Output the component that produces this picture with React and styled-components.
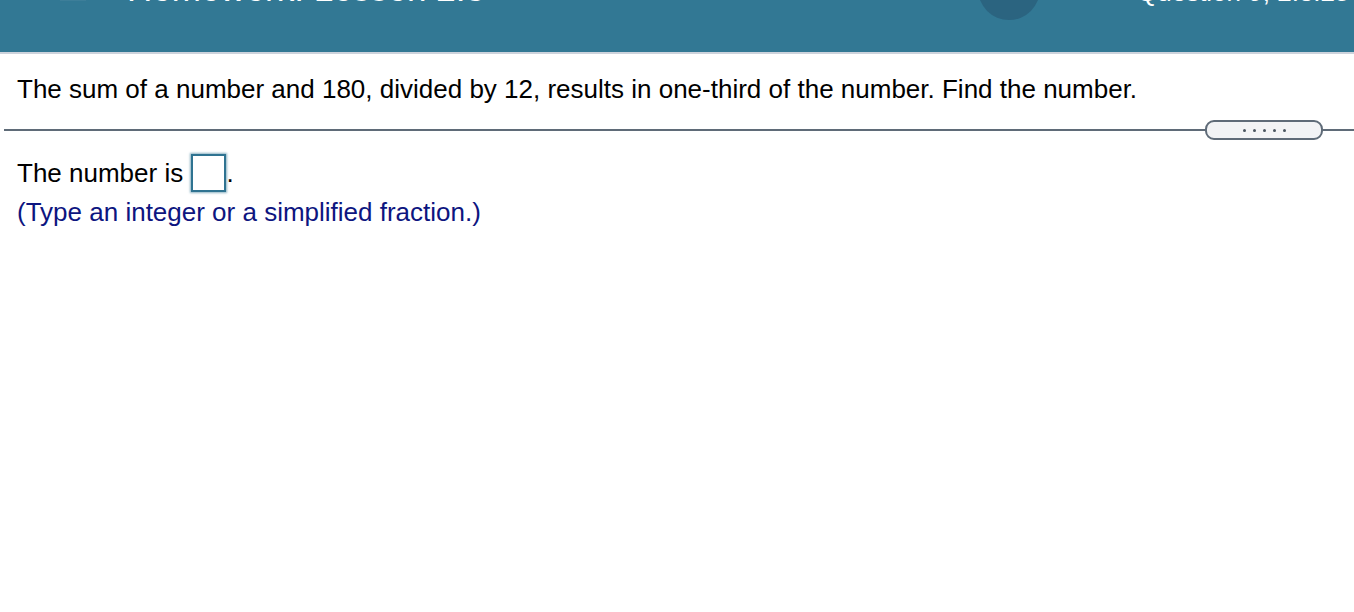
import React from 'react';
import styled, { createGlobalStyle } from 'styled-components';

const GlobalStyle = createGlobalStyle`
    html, body {
        margin: 0;
        padding: 0;
        background: #fff;
        font-family: Arial, "Liberation Sans", sans-serif;
        overflow: hidden;
    }
`;

export default function App() {
    return (
        <Page>
            <GlobalStyle />
            <Header>
                <MenuIcon />
                <Title>Homework: Lesson 2.3</Title>
                <Avatar />
                <QuestionInfo>Question 9, 2.3.25-T</QuestionInfo>
            </Header>
            <Question>
                The sum of a number and 180, divided by 12, results in one-third of the number. Find the number.
            </Question>
            <Divider>
                <Rule />
                <MoreButton>
                    <Dot /><Dot /><Dot /><Dot /><Dot />
                </MoreButton>
                <Rule $short />
            </Divider>
            <Answer>
                <AnswerLine>
                    <span>The number is </span>
                    <AnswerBox />
                    <span>.</span>
                </AnswerLine>
                <Hint>(Type an integer or a simplified fraction.)</Hint>
            </Answer>
        </Page>
    );
}

const Page = styled.div`
    width: 1354px;
    height: 612px;
    overflow: hidden;
    display: flex;
    flex-direction: column;
`;

const Header = styled.div`
    flex: none;
    height: 100px;
    margin-top: -46px;
    background: #327894;
    border-bottom: 2px solid #cdd3dc;
    display: flex;
    align-items: flex-start;
    box-sizing: border-box;
    color: #fff;
`;

const MenuIcon = styled.div`
    width: 26px;
    height: 4px;
    margin: 43px 0 0 60px;
    background: #3d7e99;
`;

const Title = styled.div`
    margin: 15px 0 0 41px;
    font-size: 35px;
    line-height: 40px;
`;

const Avatar = styled.div`
    width: 62px;
    height: 62px;
    border-radius: 50%;
    background: #2b6480;
    margin: 4px 0 0 auto;
`;

const QuestionInfo = styled.div`
    margin: 23px 0 0 97px;
    width: 217px;
    font-size: 26px;
    line-height: 30px;
    white-space: nowrap;
    overflow: hidden;
`;

const Question = styled.div`
    padding: 19px 0 0 17px;
    font-size: 26px;
    line-height: 32px;
    color: #000;
`;

const Divider = styled.div`
    display: flex;
    align-items: center;
    margin: 15px 0 0 4px;
`;

const Rule = styled.div`
    height: 2px;
    background: #5f6b78;
    flex: ${p => (p.$short ? 'none' : '1')};
    width: ${p => (p.$short ? '31px' : 'auto')};
`;

const MoreButton = styled.div`
    width: 114px;
    height: 16px;
    border: 2px solid #5f6b78;
    border-radius: 9px;
    background: #f2f3f5;
    display: flex;
    justify-content: center;
    align-items: center;
    gap: 7px;
`;

const Dot = styled.span`
    width: 3px;
    height: 3px;
    border-radius: 50%;
    background: #4a5560;
`;

const Answer = styled.div`
    padding: 12px 0 0 17px;
    font-size: 26px;
`;

const AnswerLine = styled.div`
    display: flex;
    align-items: center;
    color: #000;
    height: 42px;
    white-space: pre;
`;

const AnswerBox = styled.span`
    display: inline-block;
    width: 31px;
    height: 34px;
    margin-left: 1px;
    border: 2px solid #2f7391;
    box-shadow: 0 0 2px 1px rgba(47, 115, 145, 0.55);
    background: #fff;
`;

const Hint = styled.div`
    color: #0d1580;
    line-height: 32px;
    margin-top: 2px;
`;
